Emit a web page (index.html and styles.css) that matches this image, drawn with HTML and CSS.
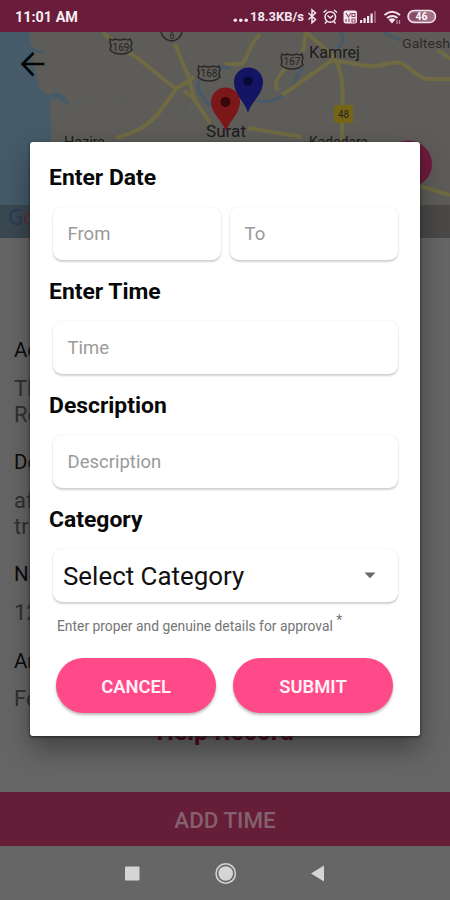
FILE: index.html
```html
<!DOCTYPE html>
<html lang="en">
<head>
<meta charset="utf-8">
<title>Add Time</title>
<link rel="stylesheet" href="styles.css">
</head>
<body>
<div class="phone">
  <header class="status">
    <span class="clock">11:01 AM</span>
    <svg class="status-icons" width="217" height="32" viewBox="233 0 217 32">
      <g fill="#f3e6ec">
        <circle cx="235.300" cy="20.300" r="1.800"/><circle cx="240.800" cy="20.300" r="1.800"/><circle cx="246.200" cy="20.300" r="1.800"/>
        <text x="250" y="21.300" font-size="13.500" font-weight="700" textLength="54" lengthAdjust="spacingAndGlyphs">18.3KB/s</text>
      </g>
      <g fill="none" stroke="#f3e6ec" stroke-width="1.500">
        <path d="M308.500 13l7 6.500-3.500 3.200V10l3.500 3-7 6.500"/>
        <circle cx="330.300" cy="17" r="5.300"/>
        <path d="M327.500 15.500l2.800 2.500 2.800-2.500M323.500 12.500l3-2.500M337 12.500l-3-2.500M326.500 21.500l-1.500 2M334 21.500l1.500 2"/>
      </g>
      <rect x="343.500" y="10.500" width="13.500" height="13" rx="2.500" fill="#f3e6ec"/>
      <path d="M346 13l2.500 4 2.500-4M352 13.500h3v3h-3zM346 19v3M349 18.500v3.500M352 19h3v3h-3z" fill="none" stroke="#8b4663" stroke-width="1.100"/>
      <path d="M360 20h2.200v3H360zM363.500 18h2.200v5h-2.200zM367 16h2.200v7H367zM370.500 13.500h2.200V23h-2.200z" fill="#f3e6ec"/>
      <path d="M374 11h2v12h-2z" fill="#9b5874"/>
      <g fill="none" stroke="#f3e6ec" stroke-width="2">
        <path d="M384.500 15q7.500-6.500 15.500 0M387 18q5.500-4 10.500 0"/>
      </g>
      <path d="M388.500 19.500q3.500-2.500 7 0L392 23.500z" fill="#f3e6ec"/>
      <path d="M397 20v4M399.500 20v4" stroke="#bb8ba0" stroke-width="1.300"/>
      <rect x="408" y="10.500" width="27.500" height="12" rx="6" fill="#a37086" stroke="#f3e6ec" stroke-width="1.500"/>
      <rect x="410" y="12.500" width="13" height="8" rx="4" fill="#8a4966"/>
      <text x="421.500" y="20.200" font-size="10.500" font-weight="700" text-anchor="middle" fill="#fff">46</text>
    </svg>
  </header>

  <section class="map">
    <svg width="450" height="206" viewBox="0 32 450 206">
      <rect y="32" width="450" height="206" fill="#5e5c59"/>
      <path d="M0 32h30c-2 8 1 14 5 17 4 3 9 2 11 0-2 5-7 4-12 4-4 6 0 12 3 22 0 10 3 18 12 20 5-4 13-2 16 2l6 10c-6-4-12-9-20-8-3 10 2 26 0 42v97H0z" fill="#455b69"/>
      <g fill="none" stroke="#455b69" stroke-width="3">
        <path d="M207 72c-7 3-11 13-7 20s7 12 12 14M207 72c10-2 14-7 23-4M256 101c16 2 29-4 37-17s5-12 10-15M341 32c4 8 1 14-4 15M385 33l16 8"/>
      </g>
      <path d="M80 98v8M124 96l-3 8M185 105v10" stroke="#515d61" stroke-width="2"/>
      <g fill="none" stroke="#706a42" stroke-width="4">
        <path d="M103 32c9 10 25 20 33 25l40 32-18 25c-10 12-24 19-42 24M176 89c7-5 12-6 18-13M175 44l14 34 5 21 16 24M184 91l12 8M225 64h17c7-8 5-16 18-30M306 32l27 24-2 5-49 34M278 90c-7-8 5-18 12-28M334 58c8 12 10 27 8 55v30M333 61c14 0 31 6 41 5s20-5 27-3 18 17 28 16h21M438 50l12 9M248 128l54 9M306 32l-3 20M420 186l30 9"/>
      </g>
      <g fill="#5e5c59" stroke="#292827" stroke-width="1.500">
        <path d="M110 39q3 2 5 0 5 2 10 0 3 2 5 0l2 4q-2 4 0 7-4 4-11 4t-11-4q2-4 0-7z"/>
        <path d="M199 66q3 2 5 0 5 2 10 0 3 2 5 0l1 4q-2 4 0 7-4 4-11 4t-11-4q2-4 0-7z"/>
        <path d="M282 54q3 2 5 0 5 2 10 0 3 2 5 0l1 4q-2 4 0 7-4 4-11 4t-11-4q2-4 0-7z"/>
        <path d="M161 32q2 8 11 9 8-1 10-9"/>
      </g>
      <g fill="#242322" font-size="10" text-anchor="middle">
        <text x="121" y="50.500">169</text><text x="209" y="77">168</text><text x="292" y="65">167</text><text x="172" y="38.500" font-size="9">6</text>
      </g>
      <rect x="334" y="105" width="19" height="18" rx="2" fill="#776516"/>
      <text x="343.500" y="118" font-size="10" text-anchor="middle" fill="#242322">48</text>
      <g fill="#1b1b1b">
        <text x="309" y="58" font-size="16" textLength="51" lengthAdjust="spacingAndGlyphs">Kamrej</text>
        <text x="402" y="48" font-size="13" textLength="48" lengthAdjust="spacingAndGlyphs" fill="#2c2b2a">Galtesh</text>
        <text x="206" y="137" font-size="17" textLength="40" lengthAdjust="spacingAndGlyphs">Surat</text>
        <text x="64" y="147" font-size="14.500" textLength="41" lengthAdjust="spacingAndGlyphs">Hazira</text>
        <text x="309" y="147" font-size="14.500" textLength="59" lengthAdjust="spacingAndGlyphs">Kadodara</text>
      </g>
      <path d="M248 113c-2-10-14-18-14-31a14.500 14.500 0 0 1 29 0c0 13-13 21-15 31z" fill="#131463"/>
      <circle cx="248" cy="81" r="4.500" fill="#080932"/>
      <path d="M226 132c-2-10-15-18-15-30a14.500 14.500 0 0 1 29 0c0 12-12 20-14 30z" fill="#7b1719"/>
      <circle cx="225.500" cy="102" r="5" fill="#350809"/>
      <circle cx="408.500" cy="164" r="23.500" fill="#701a3e"/>
      <rect y="205" width="450" height="33" fill="#262626" opacity=".35"/>
      <text x="8" y="225" font-size="21" font-family="Open Sans" fill="#293a58">G<tspan fill="#6b2929">o</tspan></text>
      <path d="M44.500 64H23M33.500 53L22.500 64l11 11.500" fill="none" stroke="#050505" stroke-width="2.600"/>
    </svg>
  </section>

  <main class="details">
    <p class="label">Ad</p>
    <p class="value">Th<br>Re</p>
    <p class="label second">De</p>
    <p class="value two">af<br>tr</p>
    <p class="label third">Na</p>
    <p class="value one">12</p>
    <p class="label fourth">Ar</p>
    <p class="value last">Fe</p>
    <p class="help">Help Record</p>
  </main>

  <div class="add">ADD TIME</div>
  <nav class="nav">
    <svg width="450" height="54" viewBox="0 0 450 54">
      <rect x="125" y="20.500" width="14.500" height="14" rx="1" fill="#d5d5d5"/>
      <circle cx="225.700" cy="27.500" r="9.700" fill="none" stroke="#d5d5d5" stroke-width="1.500"/>
      <circle cx="225.700" cy="27.500" r="7.300" fill="#d5d5d5"/>
      <path d="M311 27.500l13-8v16z" fill="#d5d5d5"/>
    </svg>
  </nav>

  <form class="dialog">
    <h2>Enter Date</h2>
    <div class="fields"><div class="field">From</div><div class="field">To</div></div>
    <h2>Enter Time</h2>
    <div class="fields"><div class="field">Time</div></div>
    <h2>Description</h2>
    <div class="fields"><div class="field">Description</div></div>
    <h2>Category</h2>
    <div class="fields select-row"><div class="field select"><span>Select Category</span>
      <svg width="12" height="7" viewBox="0 0 12 7"><path d="M.5.500h11L6 6.300z" fill="#686868"/></svg></div></div>
    <p class="note">Enter proper and genuine details for approval <span class="star">*</span></p>
    <div class="actions"><button type="button">CANCEL</button><button type="button">SUBMIT</button></div>
  </form>
</div>
</body>
</html>
```
FILE: styles.css
```css
* { box-sizing: border-box; }
body { margin: 0; font-family: Roboto, "Liberation Sans", sans-serif; }
h2, p { margin: 0; }
svg { display: block; font-family: Roboto, sans-serif; }
.phone { position: relative; width: 450px; height: 900px; overflow: hidden; background: #666; display: flex; flex-direction: column; }
.status { height: 32px; background: #691d3b; display: flex; align-items: center; justify-content: space-between; padding-left: 15px; color: #f8eef2; }
.clock { font-size: 14.4px; font-weight: 700; padding-top: 2px; }
.map { height: 206px; }
.details { height: 554px; padding: 99px 0 0 14px; overflow: hidden; }
.label { font-size: 20.5px; line-height: 26px; font-weight: 450; color: #0c0c0c; }
.value { font-size: 22px; line-height: 26px; color: #303030; margin-top: 13px; }
.second { margin-top: 21px; }
.third { margin-top: 21px; }
.fourth { margin-top: 22px; }
.two { margin-top: 13px; }
.one { margin-top: 13px; }
.last { margin-top: 12px; }
.help { width: 436px; margin-top: 6px; padding-right: 14px; text-align: center; font-size: 25px; line-height: 28px; font-weight: 700; color: #520721; }
.add { height: 54px; background: #661d37; color: #83616e; display: flex; align-items: center; justify-content: center; font-size: 22.400px; font-weight: 500; padding-top: 1px; }
.nav { height: 54px; }
.dialog { position: absolute; left: 30px; top: 142px; width: 390px; height: 594px; background: #fff; border-radius: 3px; padding: 22px 18px 0 19px; box-shadow: 0 1px 3px #222, 0 13px 28px rgba(0,0,0,.36); }
h2 { font-size: 22.900px; line-height: 28px; font-weight: 700; color: #080808; }
.fields { display: flex; gap: 9px; padding: 0 4px; margin: 15px 0 18px; height: 53px; }
.field { flex: 1; display: flex; align-items: center; padding: 1px 15px 0 14.5px; border-radius: 9px; font-size: 18.500px; color: #9a9a9a; background: #fff; box-shadow: 0 2px 2px rgba(0,0,0,.17), 0 0 2px rgba(0,0,0,.1); }
.select-row { margin: 15px 0 14px; height: 53px; }
.select { justify-content: space-between; padding: 0 22px 0 10px; font-size: 25.900px; color: #111; }
.note { position: relative; padding-left: 8px; font-size: 13.850px; line-height: 20px; color: #757575; white-space: nowrap; }
.star { position: relative; top: -6px; }
.actions { display: flex; gap: 17px; padding: 0 9px 0 7px; margin-top: 22px; }
button { flex: 1; height: 55px; border: 0; border-radius: 28px; padding: 1px 0 0; color: #fff0f5; background: #ff4a89; font: 600 18.400px Roboto, sans-serif; box-shadow: 0 2px 3px rgba(0,0,0,.28); }
```
